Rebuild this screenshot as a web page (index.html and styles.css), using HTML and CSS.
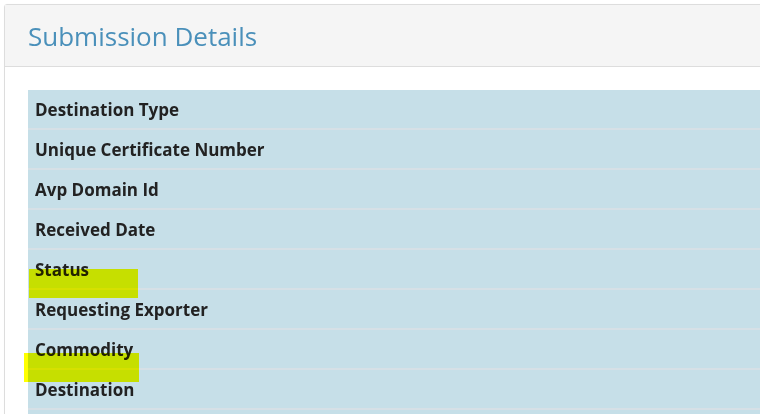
FILE: index.html
```html
<!DOCTYPE html>
<html lang="en">
  <head>
    <meta charset="UTF-8" />
    <title>Submission Details</title>
    <link rel="stylesheet" href="styles.css">
  </head>
  <body>
    <div class="panel">
      <div class="panel-heading">
        <h3 class="panel-title">Submission Details</h3>
      </div>
      <div class="panel-body">
        <div class="details">
          <div class="details-row">Destination Type</div>
          <div class="details-row">Unique Certificate Number</div>
          <div class="details-row">Avp Domain Id</div>
          <div class="details-row">Received Date</div>
          <div class="details-row">Status</div>
          <div class="details-row">Requesting Exporter</div>
          <div class="details-row">Commodity</div>
          <div class="details-row">Destination</div>
          <div class="details-row"></div>
          <span class="mark mark-status"></span>
          <span class="mark mark-commodity"></span>
        </div>
      </div>
    </div>
  </body>
</html>
```
FILE: styles.css
```css
body {
  margin: 0;
  background-color: white;
  font-family: "Open Sans", "Noto Sans", sans-serif;
  overflow: hidden;
}
.panel {
  margin: 4px 0 0 4px;
  width: 820px;
  border: 1px solid #dddddd;
  border-radius: 3px;
  box-shadow: 0 0 1px rgba(0, 0, 0, 0.05);
}
.panel-heading {
  height: 61px;
  background-color: #f5f5f5;
  border-bottom: 1px solid #dddddd;
  display: flex;
  align-items: center;
  padding-left: 23px;
}
.panel-title {
  margin: 0;
  font-size: 26px;
  font-weight: normal;
  color: #4a90ba;
}
.panel-body {
  padding: 23px 0 0 23px;
}
.details {
  position: relative;
  background-color: #c6dfe8;
}
.details-row {
  height: 38px;
  border-bottom: 2px solid #d6e0e6;
  display: flex;
  align-items: center;
  padding-left: 7px;
  font-size: 17px;
  font-weight: bold;
  color: #222222;
}
.mark {
  position: absolute;
  height: 29px;
  background-color: #ffff00;
  mix-blend-mode: multiply;
}
.mark-status {
  left: 1px;
  top: 179px;
  width: 109px;
}
.mark-commodity {
  left: -4px;
  top: 263px;
  width: 115px;
}
```
